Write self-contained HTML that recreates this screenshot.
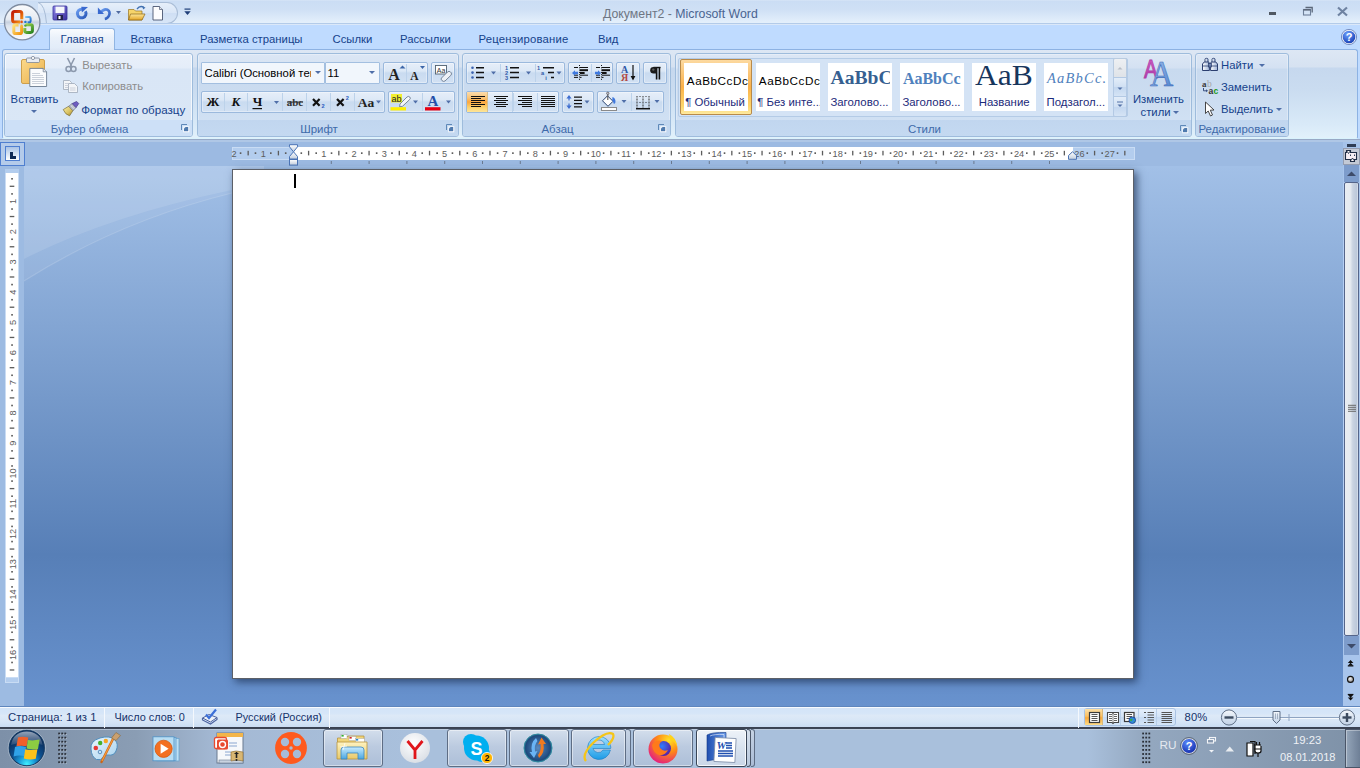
<!DOCTYPE html>
<html><head><meta charset="utf-8">
<style>
*{box-sizing:border-box}
html,body{margin:0;padding:0}
body{width:1360px;height:768px;overflow:hidden;position:relative;font-family:"Liberation Sans",sans-serif;font-size:11px;color:#15428b;background:#bfdbff}
.a{position:absolute}
.t{position:absolute;white-space:nowrap;line-height:1}
.tab{font-size:11.3px;color:#15428b}
/* title */
#title{left:0;top:0;width:1360px;height:25px;background:linear-gradient(#dae7f7 0,#cbddf4 1px,#cfe0f5 40%,#e3effb 92%);border-bottom:1px solid #d6e6f9}
#tabs{left:0;top:25px;width:1360px;height:24px;background:#bfdbff}
#ribbon{left:2px;top:49px;width:1356px;height:90px;border:1px solid #8db2e3;border-bottom:1px solid #d9f3fd;border-radius:3px 3px 2px 2px;background:linear-gradient(#dde7f4 0,#d6e2f1 17px,#c6d8ee 18px,#cadcf0 45%,#d9eaf8 85%,#e2f1fb 100%);box-shadow:0 1px 0 #e4fbff}
.grp{position:absolute;top:52.5px;height:84px;border:1px solid #9ebcdc;border-radius:3px;background:linear-gradient(#dce7f5 0,#d4e1f2 14px,#c8daef 15px,#cbdcf0 50%,#d3e3f5 100%);box-shadow:inset 0 0 0 1px rgba(255,255,255,.3)}
.glab{position:absolute;left:0;right:0;bottom:0;height:15.5px;background:linear-gradient(#c1d6ef,#c4d9f1);border-radius:0 0 2px 2px;color:#3e6aaa;text-align:center;font-size:11.45px;line-height:18px;padding-right:18px}
.grp.hov{background:linear-gradient(#e9f0fa 0,#e4edf9 14px,#d9e6f6 15px,#dae7f6 100%);box-shadow:inset 0 0 0 1px rgba(255,255,255,.7)}
.grp.hov .glab{background:#cde0f7}
#rulerrow{left:0;top:139px;width:1360px;height:27px;background:linear-gradient(#98a9c6 0,#98a9c6 1.5px,#afc7e6 1.5px,#afc7e6 3px,#9cbae2 3px)}
#docarea{left:24px;top:166px;width:1319px;height:540px;background:linear-gradient(#a2c0e7 0%,#577fb7 72%,#6892ce 100%)}
#leftcol{left:0;top:166px;width:24px;height:540px;background:#9dbbe2}
#page{left:232px;top:169px;width:902px;height:510px;background:#fff;border:1px solid #5c6068;box-shadow:3px 3px 8px rgba(25,45,80,.7)}
#status{left:0;top:706px;width:1360px;height:22px;background:linear-gradient(#5f86bd 0,#5f86bd 1px,#f7fafe 1px,#f7fafe 2px,#d3e4f8 2px,#d6e6f8 35%,#dde9f7 45%,#d6e5f6 75%,#cadcf2 100%);border-bottom:1px solid #3a4252}
#taskbar{left:0;top:728px;width:1360px;height:40px;background:linear-gradient(90deg,#7d90a8 0%,#8a9db4 10%,#a4b9d4 16%,#a9c0dc 30%,#a9c0dc 80%,#94a8c0 84%,#7e91a7 100%)}
.rt{position:absolute;white-space:nowrap;line-height:1;font-size:11.3px;color:#15428b}
.bgp{position:absolute;border:1px solid #9bb9dd;border-radius:2px;background:linear-gradient(#e6eef9 0%,#dce8f6 40%,#c9dbf0 50%,#d2e1f3 100%);box-shadow:inset 0 0 0 1px rgba(255,255,255,.35)}
.dv{position:absolute;top:1px;bottom:1px;width:1px;background:#bcd2ea}
.dd{position:absolute;width:0;height:0;border-left:3px solid transparent;border-right:3px solid transparent;border-top:3px solid #4f6ea8}
.inbox{position:absolute;border:1px solid #a3bfe0;border-radius:1px;background:#f1f6fc}
.launch{position:absolute;width:9px;height:9px}
.tbb{position:absolute;top:729px;height:38px;border:1px solid #5e6d84;border-radius:3px;background:linear-gradient(#d3deec 0%,#bccbe0 45%,#adbfd8 100%);box-shadow:inset 0 0 0 1px rgba(255,255,255,.45)}
</style></head><body>
<div id="title" class="a"></div>
<div id="tabs" class="a"></div>

<!-- QAT pill -->
<div class="a" style="left:38px;top:2px;width:140px;height:22px;border:1px solid #a9bdd7;border-left:none;border-radius:0 11px 11px 0;background:linear-gradient(#e6effa,#d9e6f7 50%,#cfdff4 52%,#d8e6f7)"></div>
<svg class="a" style="left:30px;top:0" width="20" height="25" viewBox="0 0 20 25"><path d="M8 2.5 Q15 4 16.5 23.5" fill="none" stroke="#a9bdd7" stroke-width="1"/></svg>
<!-- QAT icons -->
<svg class="a" style="left:50px;top:3px" width="145" height="20" viewBox="0 0 145 20">
<defs><linearGradient id="sv" x1="0" y1="0" x2="1" y2="1"><stop offset="0" stop-color="#8f86e6"/><stop offset="1" stop-color="#3a2f9e"/></linearGradient>
<linearGradient id="fo" x1="0" y1="0" x2="0" y2="1"><stop offset="0" stop-color="#fde79a"/><stop offset="1" stop-color="#e4a526"/></linearGradient></defs>
<rect x="3" y="3" width="14" height="14" rx="1" fill="url(#sv)" stroke="#34309a" stroke-width=".8"/>
<rect x="5.5" y="3.6" width="9" height="6.5" fill="#f4f6fb"/>
<rect x="7" y="12" width="6" height="5" fill="#22224a"/><rect x="8.5" y="13" width="2" height="3" fill="#fff"/>
<defs><linearGradient id="ar" x1="0" y1="0" x2="1" y2="1"><stop offset="0" stop-color="#6a9cf0"/><stop offset="1" stop-color="#2a58b8"/></linearGradient></defs>
<path d="M31.9 6.2 A4.3 4.3 0 1 0 35.4 8.3" fill="none" stroke="url(#ar)" stroke-width="3"/>
<path d="M31.3 3.8 L38 4 L31.9 9.6 Z" fill="#3a6ad0"/>
<path d="M50.6 9.6 Q54 5.2 57.6 6.8 Q60.6 8.6 59 12.6 Q57.8 15.4 54.8 16" fill="none" stroke="url(#ar)" stroke-width="2.6"/>
<path d="M47.9 4.6 V10.9 H54 Z" fill="#3a6ad0"/>
<path d="M66 8 L71 8 L68.5 11 Z" fill="#4f6aa0"/>
<path d="M78.5 6.5 L84 6.5 L85.5 8 L92 8 L92 17 L78.5 17 Z" fill="#f6d46a" stroke="#9a7420" stroke-width=".7"/>
<path d="M80.5 11 L95 11 L92 17 L78.5 17 Z" fill="url(#fo)" stroke="#8a6418" stroke-width=".7"/>
<path d="M87 6 Q90 2 94 4.5" fill="none" stroke="#3f6fb0" stroke-width="1.3"/><path d="M92.5 3 L95.5 4.8 L93 6.6Z" fill="#3f6fb0"/>
<path d="M103 3.5 L109.5 3.5 L112.5 6.5 L112.5 17 L103 17 Z" fill="#fdfdfe" stroke="#4a5670" stroke-width=".9"/>
<path d="M109.5 3.5 L109.5 6.5 L112.5 6.5" fill="#dfe3ea" stroke="#4a5670" stroke-width=".7"/>
<rect x="134.5" y="5.5" width="6" height="1.2" fill="#1f3f7a"/><path d="M134.3 8.3 L140.7 8.3 L137.5 12 Z" fill="#1f3f7a"/>
</svg>
<div class="t" style="left:603px;top:7.6px;font-size:12.3px;color:#6e7683">Документ2 - <span style="color:#4a6491">Microsoft Word</span></div>
<!-- window controls -->
<div class="a" style="left:1269px;top:12px;width:7px;height:2.5px;background:#505862"></div>
<svg class="a" style="left:1302px;top:6px" width="12" height="10" viewBox="0 0 12 10"><rect x="1.5" y="3.5" width="7" height="5.5" fill="none" stroke="#6d7f99" stroke-width="1.1"/><rect x="1.5" y="3" width="7" height="1.6" fill="#5b6779"/><path d="M3.5 1.5 H10.2 V6.5" fill="none" stroke="#5b6779" stroke-width="1.3"/></svg>
<svg class="a" style="left:1337px;top:6px" width="11" height="11" viewBox="0 0 11 11"><path d="M1 1.5 L10 9.5 M10 1.5 L1 9.5" stroke="#6f83a2" stroke-width="2.2"/></svg>
<!-- tabs -->
<div class="a" style="left:0;top:23px;width:1360px;height:1px;background:#b3cbe9"></div><div class="a" style="left:0;top:24px;width:1360px;height:1px;background:#dbe8f9"></div>
<div class="a" style="left:49px;top:28px;width:66px;height:23px;border:1px solid #90b5e2;border-bottom:none;border-radius:3px 3px 0 0;background:linear-gradient(#f9fbfe,#eaf1fa 40%,#e0ebf8)"></div>
<div class="t tab" style="left:60.5px;top:34px">Главная</div>
<div class="t tab" style="left:130.5px;top:34px">Вставка</div>
<div class="t tab" style="left:200px;top:34px">Разметка страницы</div>
<div class="t tab" style="left:332.5px;top:34px">Ссылки</div>
<div class="t tab" style="left:400px;top:34px">Рассылки</div>
<div class="t tab" style="left:478.5px;top:34px;letter-spacing:.2px">Рецензирование</div>
<div class="t tab" style="left:598px;top:34px">Вид</div>
<svg class="a" style="left:1341px;top:29px" width="16" height="16" viewBox="0 0 16 16"><defs><radialGradient id="hq" cx=".4" cy=".3" r=".8"><stop offset="0" stop-color="#6fa2ff"/><stop offset="1" stop-color="#0a2fa8"/></radialGradient></defs><circle cx="8" cy="8" r="7" fill="url(#hq)" stroke="#f2f6fb" stroke-width="1.3"/><circle cx="8" cy="8" r="7.6" fill="none" stroke="#2f4f9a" stroke-width=".6"/><text x="8" y="12.3" font-family="Liberation Sans" font-weight="bold" font-size="11" fill="#fff" text-anchor="middle">?</text></svg>

<!-- office button -->
<svg class="a" style="left:0;top:0" width="48" height="48" viewBox="0 0 48 48">
<defs>
<linearGradient id="ob" x1="0" y1="0" x2="0" y2="1"><stop offset="0" stop-color="#fbfcfd"/><stop offset=".42" stop-color="#e6ebf2"/><stop offset=".5" stop-color="#c6d0de"/><stop offset=".6" stop-color="#dde4ee"/><stop offset="1" stop-color="#fafbfd"/></linearGradient>
<linearGradient id="lr" x1="0" y1="0" x2="1" y2="1"><stop offset="0" stop-color="#c01a06"/><stop offset=".6" stop-color="#e05a08"/><stop offset="1" stop-color="#f6a21a"/></linearGradient>
<linearGradient id="ly" x1="0" y1="0" x2="1" y2="1"><stop offset="0" stop-color="#fde27a"/><stop offset="1" stop-color="#f39410"/></linearGradient>
<linearGradient id="lg" x1="0" y1="0" x2="1" y2="1"><stop offset="0" stop-color="#a6d84e"/><stop offset="1" stop-color="#2a8420"/></linearGradient>
<linearGradient id="lb" x1="0" y1="0" x2="1" y2="1"><stop offset="0" stop-color="#7cc8f6"/><stop offset="1" stop-color="#1b64c4"/></linearGradient>
</defs>
<circle cx="22.2" cy="22.2" r="17.7" fill="url(#ob)" stroke="#7f8ca0" stroke-width="1.3"/>
<path d="M20 22 H14.6 Q12.6 22 12.6 20 V13.6 Q12.6 11.6 14.6 11.6 H19.8 Q21.8 11.6 21.8 13.6 V19.2" fill="none" stroke="url(#lr)" stroke-width="3"/>
<path d="M21.6 26 V32 Q21.6 33.6 20 33.6 H15.4 Q13.8 33.6 13.8 32 V26.6 Q13.8 25 15.4 25 H18.5" fill="none" stroke="url(#ly)" stroke-width="3"/>
<path d="M25.6 24.8 H30.6 Q32.4 24.8 32.4 26.6 V30.6 Q32.4 32.4 30.6 32.4 H26.4 Q24.8 32.4 24.8 30.6 V28" fill="none" stroke="url(#lg)" stroke-width="3"/>
<path d="M25.2 17 H29.2 Q30.6 17 30.6 18.4 V21 Q30.6 22.2 29.4 22.2 H27.6" fill="none" stroke="url(#lb)" stroke-width="2"/>
<circle cx="21.6" cy="21.9" r="1.3" fill="#e8560c"/><circle cx="25.4" cy="21.9" r="1.2" fill="#1f74d4"/>
<circle cx="21.6" cy="25.6" r="1.2" fill="#f8b838"/><circle cx="25.4" cy="25.6" r="1.2" fill="#4ca43a"/>
</svg>
<div id="ribbon" class="a"></div>
<div class="a" style="left:50px;top:48px;width:64px;height:3px;background:linear-gradient(#e2ebf8,#dde7f4)"></div>
<div class="grp hov" style="left:4px;width:189px"><div class="glab">Буфер обмена</div></div>
<div class="grp" style="left:197px;width:262px"><div class="glab">Шрифт</div></div>
<div class="grp" style="left:462px;width:209px"><div class="glab">Абзац</div></div>
<div class="grp" style="left:675px;width:517px"><div class="glab">Стили</div></div>
<div class="grp" style="left:1195px;width:94px"><div class="glab" style="padding-right:0">Редактирование</div></div>
<!-- ===== Clipboard ===== -->
<svg class="a" style="left:18px;top:55px" width="32" height="34" viewBox="0 0 32 34">
<defs><linearGradient id="cb" x1="0" y1="0" x2="1" y2="1"><stop offset="0" stop-color="#fbd98c"/><stop offset="1" stop-color="#eab04a"/></linearGradient></defs>
<rect x="3.5" y="4.5" width="23" height="24" rx="1.5" fill="url(#cb)" stroke="#c99840" stroke-width=".9"/>
<rect x="8.5" y="3" width="13" height="4.5" rx="1" fill="#e8ecf2" stroke="#7b8797" stroke-width=".8"/>
<circle cx="15" cy="3" r="1.6" fill="#fff" stroke="#7b8797" stroke-width=".8"/>
<path d="M11.8 13.4 H25.2 L28.6 16.8 V31.5 H11.8 Z" fill="#fbfcfd" stroke="#6a7a8e" stroke-width=".9"/>
<path d="M25.2 13.4 V16.8 H28.6" fill="#e4e8ee" stroke="#6a7a8e" stroke-width=".7"/>
<path d="M14 18.5 H22 M14 20.5 H25 M14 22.5 H26 M14 24.5 H26 M14 26.5 H26 M14 28.5 H26" stroke="#c5ccd6" stroke-width=".9"/>
</svg>
<div class="rt" style="left:10.6px;top:94px">Вставить</div>
<div class="dd" style="left:31px;top:110px"></div>
<svg class="a" style="left:64px;top:57px" width="14" height="16" viewBox="0 0 14 16">
<path d="M3.5 1 L8 10 M10.5 1 L6 10" stroke="#8c99ad" stroke-width="1.6"/>
<circle cx="4.5" cy="12" r="2.5" fill="none" stroke="#8c99ad" stroke-width="1.5"/><circle cx="9.5" cy="12" r="2.5" fill="none" stroke="#8c99ad" stroke-width="1.5"/>
</svg>
<div class="rt" style="left:82.2px;top:59.5px;color:#8d8d8d">Вырезать</div>
<svg class="a" style="left:62px;top:79px" width="18" height="15" viewBox="0 0 18 15">
<path d="M1.5 1.5 H7.5 L9.5 3.5 V10.5 H1.5 Z" fill="#f3f5f8" stroke="#a6b0be" stroke-width=".9"/>
<path d="M6.5 4.5 H12.5 L15.5 7.5 V13.5 H6.5 Z" fill="#f3f5f8" stroke="#a6b0be" stroke-width=".9"/>
<path d="M3 4.5 H7 M3 6.5 H7 M3 8.5 H6 M8 9 H13.5 M8 11 H13.5" stroke="#c0c7d2" stroke-width=".8"/>
</svg>
<div class="rt" style="left:82.2px;top:81.3px;color:#8d8d8d">Копировать</div>
<svg class="a" style="left:62px;top:101px" width="18" height="16" viewBox="0 0 18 16">
<defs><linearGradient id="br" x1="0" y1="0" x2="1" y2="1"><stop offset="0" stop-color="#fbf2a8"/><stop offset=".6" stop-color="#d8c060"/><stop offset="1" stop-color="#9a8028"/></linearGradient></defs>
<path d="M1.2 8.6 L6.8 5.2 L11 9.6 L7.6 14.8 Q3.4 13.8 1.2 8.6Z" fill="url(#br)" stroke="#6a5a20" stroke-width=".6"/>
<path d="M6.8 5.2 L10.2 2.6 L14 6.6 L11 9.6 Z" fill="#d4d8e0" stroke="#50586a" stroke-width=".6"/>
<path d="M8 5 L12 8.8 M9.4 3.8 L13 7.6" stroke="#8a90a0" stroke-width=".5"/>
<path d="M10.2 2.6 L14.6 .4 L16.8 2.6 L14 6.6 Z" fill="#6d5cc0" stroke="#3a2e80" stroke-width=".6"/>
</svg>
<div class="rt" style="left:81.3px;top:103.8px;font-size:11.6px">Формат по образцу</div>
<svg class="launch" style="left:181px;top:124px" viewBox="0 0 9 9"><path d="M.5 6 V.5 H6" fill="none" stroke="#5e88b8" stroke-width="1"/><rect x="2.3" y="2.3" width="6" height="6" fill="#fff" opacity=".9"/><rect x="3" y="3" width="4.2" height="4.2" fill="#4f7aae"/><rect x="3" y="3" width="1.2" height="1.2" fill="#fff" opacity=".8"/></svg>
<!-- ===== Font ===== -->
<div class="inbox" style="left:201px;top:62px;width:124px;height:22px"></div>
<div class="rt" style="left:204.5px;top:67.6px;color:#000;font-size:11.3px;width:106px;overflow:hidden">Calibri (Основной текст)</div>
<div class="dd" style="left:315px;top:71px"></div>
<div class="inbox" style="left:325px;top:62px;width:55px;height:22px"></div>
<div class="rt" style="left:327.5px;top:67.6px;color:#000">11</div>
<div class="dd" style="left:369px;top:71px"></div>
<div class="bgp" style="left:383px;top:62px;width:45px;height:22px"><div class="dv" style="left:22px"></div></div>
<svg class="a" style="left:385px;top:63px" width="42" height="20" viewBox="0 0 42 20">
<text x="9" y="16.5" font-family="Liberation Serif" font-weight="bold" font-size="16" fill="#222" text-anchor="middle">A</text>
<path d="M14.5 5.5 L17.5 2.5 L20.5 5.5Z" fill="#3d66a8"/>
<text x="29.5" y="16.5" font-family="Liberation Serif" font-weight="bold" font-size="11.5" fill="#222" text-anchor="middle">A</text>
<path d="M35 3 L40 3 L37.5 6Z" fill="#3d66a8"/>
</svg>
<div class="bgp" style="left:431px;top:62px;width:24px;height:22px"></div>
<svg class="a" style="left:433px;top:64px" width="20" height="18" viewBox="0 0 20 18">
<rect x="2.5" y="1.5" width="11" height="8.5" fill="#fff" stroke="#506070" stroke-width=".9"/>
<text x="8" y="8.6" font-family="Liberation Sans" font-size="7" fill="#333" text-anchor="middle">Aa</text>
<path d="M8.5 14 L14.5 8 Q16 6.6 17.5 8 L18 8.5 Q19.2 10 17.8 11.4 L12 17 Q10.5 18 9 16.6 L8.6 16.2 Q7.6 15 8.5 14Z" fill="#eef1f6" stroke="#6a7a90" stroke-width=".9"/>
</svg>
<div class="bgp" style="left:201px;top:91px;width:184px;height:22px">
<div class="dv" style="left:22px"></div><div class="dv" style="left:45px"></div><div class="dv" style="left:80px"></div><div class="dv" style="left:104px"></div><div class="dv" style="left:128px"></div><div class="dv" style="left:152px"></div>
</div>
<svg class="a" style="left:202px;top:92px" width="182" height="20" viewBox="0 0 182 20">
<text x="11" y="14.3" font-family="Liberation Serif" font-weight="bold" font-size="13" fill="#111" text-anchor="middle">Ж</text>
<text x="34" y="14.3" font-family="Liberation Serif" font-weight="bold" font-style="italic" font-size="13" fill="#111" text-anchor="middle">К</text>
<text x="55.5" y="14.3" font-family="Liberation Serif" font-weight="bold" font-size="13" fill="#111" text-anchor="middle">Ч</text>
<rect x="50.5" y="16" width="9.5" height="1.2" fill="#111"/>
<path d="M72 9 L77 9 L74.5 12Z" fill="#4f6ea8"/>
<text x="93" y="13.8" font-family="Liberation Serif" font-weight="bold" font-size="11" fill="#333" text-anchor="middle">abc</text>
<rect x="85" y="9.6" width="16" height="1" fill="#333"/>
<path d="M111 7 L117.6 13.8 M117.6 7 L111 13.8" stroke="#111" stroke-width="2.2"/>
<text x="121" y="15.6" font-family="Liberation Sans" font-weight="bold" font-size="5.6" fill="#2a5cc0" text-anchor="middle">2</text>
<path d="M135 7 L141.6 13.8 M141.6 7 L135 13.8" stroke="#111" stroke-width="2.2"/>
<text x="145.3" y="8" font-family="Liberation Sans" font-weight="bold" font-size="5.6" fill="#2a5cc0" text-anchor="middle">2</text>
<text x="164" y="15" font-family="Liberation Serif" font-weight="bold" font-size="13.5" fill="#222" text-anchor="middle">Aa</text>
<path d="M174 8.5 L179 8.5 L176.5 11.5Z" fill="#4f6ea8"/>
</svg>
<div class="bgp" style="left:388px;top:91px;width:67px;height:22px"><div class="dv" style="left:33px"></div></div>
<svg class="a" style="left:389px;top:92px" width="65" height="20" viewBox="0 0 65 20">
<rect x="2" y="2" width="11" height="8.5" fill="#f2ee30"/>
<text x="7.5" y="9.5" font-family="Liberation Sans" font-size="9" fill="#222" text-anchor="middle">ab</text>
<path d="M11 12 L18 5 Q19.5 3.8 20.8 5 Q22 6.4 20.6 7.6 L13.6 14.2 L10.6 14.8 Z" fill="#f5f7fa" stroke="#5d6d85" stroke-width=".8"/>
<rect x="1.5" y="15.2" width="15.5" height="3.3" fill="#ffef00"/>
<path d="M24 8.5 L29 8.5 L26.5 11.5Z" fill="#4f6ea8"/>
<text x="44" y="14.2" font-family="Liberation Serif" font-weight="bold" font-size="15" fill="#2550a8" text-anchor="middle">A</text>
<rect x="36" y="15.2" width="15.5" height="3.3" fill="#e70012"/>
<path d="M57 8.5 L62 8.5 L59.5 11.5Z" fill="#4f6ea8"/>
</svg>
<svg class="launch" style="left:446px;top:124.3px" viewBox="0 0 9 9"><path d="M.5 6 V.5 H6" fill="none" stroke="#5e88b8" stroke-width="1"/><rect x="2.3" y="2.3" width="6" height="6" fill="#fff" opacity=".9"/><rect x="3" y="3" width="4.2" height="4.2" fill="#4f7aae"/><rect x="3" y="3" width="1.2" height="1.2" fill="#fff" opacity=".8"/></svg>
<!-- ===== Paragraph ===== -->
<div class="bgp" style="left:466px;top:62px;width:99px;height:22px"><div class="dv" style="left:33px"></div><div class="dv" style="left:68px"></div></div>
<svg class="a" style="left:466px;top:62px" width="99" height="22" viewBox="0 0 99 22">
<g fill="#3a62b0"><circle cx="6.5" cy="5.7" r="1.3"/><circle cx="6.5" cy="10.6" r="1.3"/><circle cx="6.5" cy="15.5" r="1.3"/></g>
<path d="M10 5.7 H18 M10 10.6 H18 M10 15.5 H18" stroke="#111" stroke-width="1.5"/>
<path d="M25 9.5 L30 9.5 L27.5 12.5Z" fill="#4f6ea8"/>
<g font-family="Liberation Sans" font-weight="bold" font-size="5.6" fill="#2f5aa8" text-anchor="middle"><text x="40.5" y="7.8">1</text><text x="40.5" y="12.7">2</text><text x="40.5" y="17.6">3</text></g>
<path d="M44 5.7 H53 M44 10.6 H53 M44 15.5 H53" stroke="#111" stroke-width="1.5"/>
<path d="M60 9.5 L65 9.5 L62.5 12.5Z" fill="#4f6ea8"/>
<g font-family="Liberation Sans" font-weight="bold" font-size="5.6" fill="#2f5aa8" text-anchor="middle"><text x="72.5" y="7.8">1</text><text x="76.5" y="12.7">a</text><text x="80" y="17.6">i</text></g>
<path d="M77 5.7 H88 M82 10.6 H88 M85 15.5 H88" stroke="#111" stroke-width="1.5"/>
<path d="M90.5 9.5 L95.5 9.5 L93 12.5Z" fill="#4f6ea8"/>
</svg>
<div class="bgp" style="left:568px;top:62px;width:45px;height:22px"><div class="dv" style="left:22px"></div></div>
<svg class="a" style="left:568px;top:62px" width="45" height="22" viewBox="0 0 45 22">
<path d="M11.5 3 V18" stroke="#111" stroke-width="1" stroke-dasharray="1 1.3"/>
<path d="M6 5.5 H10 M12 5.5 H20 M12 11 H16.5 M6 13.2 H10 M12 13.2 H20 M6 15.4 H10 M12 15.4 H13.5" stroke="#111" stroke-width="1"/>
<path d="M12 8.2 H20" stroke="#111" stroke-width="2"/><path d="M12 11 H16.5" stroke="#111" stroke-width="2"/>
<path d="M4 11 L7 8.3 V9.8 H10 V12.2 H7 V13.7Z" fill="#3f7ae0"/>
<path d="M33.5 3 V18" stroke="#111" stroke-width="1" stroke-dasharray="1 1.3"/>
<path d="M28 5.5 H32 M34 5.5 H42 M34 11 H38.5 M28 13.2 H32 M34 13.2 H42 M28 15.4 H32 M34 15.4 H35.5" stroke="#111" stroke-width="1"/>
<path d="M34 8.2 H42" stroke="#111" stroke-width="2"/><path d="M34 11 H38.5" stroke="#111" stroke-width="2"/>
<path d="M33 11 L30 8.3 V9.8 H27 V12.2 H30 V13.7Z" fill="#3f7ae0"/>
</svg>
<div class="bgp" style="left:616px;top:62px;width:24px;height:22px"></div>
<svg class="a" style="left:616px;top:62px" width="24" height="22" viewBox="0 0 24 22">
<text x="8.7" y="11" font-family="Liberation Serif" font-weight="bold" font-size="10" fill="#2f58a6" text-anchor="middle">A</text>
<text x="8.7" y="19.4" font-family="Liberation Serif" font-weight="bold" font-size="10" fill="#b24a44" text-anchor="middle">Я</text>
<path d="M17 3 V17" stroke="#111" stroke-width="1.2"/><path d="M14.6 14 L17 18.5 L19.4 14Z" fill="#111"/>
</svg>
<div class="bgp" style="left:643px;top:62px;width:24px;height:22px"></div>
<svg class="a" style="left:643px;top:62px" width="24" height="22" viewBox="0 0 24 22">
<path d="M17.5 5.5 H10.5" stroke="#111" stroke-width="1.4"/>
<path d="M13.6 5 V17.5 M16.4 5 V17.5" stroke="#111" stroke-width="1.6"/>
<path d="M13.6 5 H10.5 A3.3 3.3 0 0 0 10.5 11.6 H13.6Z" fill="#1a1a1a"/>
<circle cx="10.3" cy="7.6" r="1.2" fill="#888" opacity=".6"/>
</svg>
<div class="bgp" style="left:466px;top:91px;width:93px;height:22px"><div class="dv" style="left:46px"></div><div class="dv" style="left:70px"></div></div>
<div class="a" style="left:467px;top:92px;width:21px;height:20px;background:linear-gradient(#fbdcae 0%,#fcc474 30%,#fba740 50%,#fdd06a 75%,#fde59a 100%);border-right:1px solid #d8c08a"></div>
<div class="dv" style="left:512px;top:92px;height:20px"></div>
<svg class="a" style="left:466px;top:91px" width="93" height="22" viewBox="0 0 93 22">
<path d="M5 5.5 H19 M5 7.5 H15 M5 9.5 H19 M5 11.5 H15 M5 13.5 H19 M5 15.5 H15" stroke="#111" stroke-width="1.1"/>
<path d="M28 5.5 H42 M30 7.5 H40 M28 9.5 H42 M30 11.5 H40 M28 13.5 H42 M30 15.5 H40" stroke="#111" stroke-width="1.1"/>
<path d="M52 5.5 H66 M56 7.5 H66 M52 9.5 H66 M56 11.5 H66 M52 13.5 H66 M56 15.5 H66" stroke="#111" stroke-width="1.1"/>
<path d="M75 5.5 H89 M75 7.5 H89 M75 9.5 H89 M75 11.5 H89 M75 13.5 H89 M75 15.5 H89" stroke="#111" stroke-width="1.1"/>
</svg>
<div class="bgp" style="left:562px;top:91px;width:32px;height:22px"></div>
<svg class="a" style="left:562px;top:91px" width="32" height="22" viewBox="0 0 32 22">
<path d="M7 5 V9.5 M7 12.5 V17" stroke="#3f6fd0" stroke-width="1.2"/><path d="M4.4 7.6 L7 4 L9.6 7.6Z M4.4 14.4 L7 18 L9.6 14.4Z" fill="#3f6fd0"/>
<path d="M12 6.2 H20 M12 9.4 H20 M12 12.6 H20 M12 15.8 H20" stroke="#111" stroke-width="1.2"/>
<path d="M22.5 9.5 L27.5 9.5 L25 12.5Z" fill="#4f6ea8"/>
</svg>
<div class="bgp" style="left:597px;top:91px;width:67px;height:22px"><div class="dv" style="left:33px"></div></div>
<svg class="a" style="left:597px;top:91px" width="67" height="22" viewBox="0 0 67 22">
<path d="M5.5 9.8 L10.5 4.8 L16 10.3 L11 15.3 Z" fill="#fff" stroke="#27406e" stroke-width="1"/>
<path d="M10.8 1.5 V9" stroke="#555" stroke-width="1.1"/><circle cx="10.8" cy="2.3" r="1.2" fill="#ccd" stroke="#555" stroke-width=".7"/>
<path d="M15.5 6 Q19 7 18.4 11.5 Q17.8 13 16.6 12.6 Q16.2 10 15.2 9.6Z" fill="#3f78dd"/>
<rect x="4.5" y="16.5" width="15" height="3" fill="#fff" stroke="#8a8a8a" stroke-width="1"/>
<path d="M24.5 9 L29.5 9 L27 12Z" fill="#4f6ea8"/>
<g fill="#333">
<rect x="39.5" y="5" width="1" height="1"/><rect x="42.5" y="5" width="1" height="1"/><rect x="45.5" y="5" width="1" height="1"/><rect x="48.5" y="5" width="1" height="1"/><rect x="51.5" y="5" width="1" height="1"/><rect x="39.5" y="8" width="1" height="1"/><rect x="45.5" y="8" width="1" height="1"/><rect x="51.5" y="8" width="1" height="1"/><rect x="39.5" y="11" width="1" height="1"/><rect x="42.5" y="11" width="1" height="1"/><rect x="45.5" y="11" width="1" height="1"/><rect x="48.5" y="11" width="1" height="1"/><rect x="51.5" y="11" width="1" height="1"/><rect x="39.5" y="14" width="1" height="1"/><rect x="45.5" y="14" width="1" height="1"/><rect x="51.5" y="14" width="1" height="1"/><rect x="39.5" y="6.5" width="1" height="1"/><rect x="45.5" y="6.5" width="1" height="1"/><rect x="51.5" y="6.5" width="1" height="1"/><rect x="39.5" y="9.5" width="1" height="1"/><rect x="45.5" y="9.5" width="1" height="1"/><rect x="51.5" y="9.5" width="1" height="1"/><rect x="39.5" y="12.5" width="1" height="1"/><rect x="45.5" y="12.5" width="1" height="1"/><rect x="51.5" y="12.5" width="1" height="1"/><rect x="39.5" y="15.5" width="1" height="1"/><rect x="45.5" y="15.5" width="1" height="1"/><rect x="51.5" y="15.5" width="1" height="1"/></g>
<path d="M39 17.7 H53" stroke="#111" stroke-width="1.5"/>
<path d="M57.5 9 L62.5 9 L60 12Z" fill="#4f6ea8"/>
</svg>
<svg class="launch" style="left:658px;top:124.2px" viewBox="0 0 9 9"><path d="M.5 6 V.5 H6" fill="none" stroke="#5e88b8" stroke-width="1"/><rect x="2.3" y="2.3" width="6" height="6" fill="#fff" opacity=".9"/><rect x="3" y="3" width="4.2" height="4.2" fill="#4f7aae"/><rect x="3" y="3" width="1.2" height="1.2" fill="#fff" opacity=".8"/></svg>
<!-- ===== Styles ===== -->
<div class="a" style="left:678px;top:58px;width:450px;height:59px;border:1px solid #b4cbe6;border-radius:2px;background:#d4e3f5"></div>
<div class="a" style="left:680px;top:59px;width:72px;height:56px;border:1px solid #b88a4a;border-radius:2px;background:linear-gradient(#fcd9a0,#fbb14a 50%,#fdd56a 85%,#fee9a0);"></div>
<div class="a" style="left:684px;top:63px;width:64px;height:48px;background:#fff"></div>
<div class="a" style="left:756px;top:63px;width:64px;height:48px;background:#fff"></div>
<div class="a" style="left:828px;top:63px;width:64px;height:48px;background:#fff"></div>
<div class="a" style="left:900px;top:63px;width:64px;height:48px;background:#fff"></div>
<div class="a" style="left:972px;top:63px;width:64px;height:48px;background:#fff"></div>
<div class="a" style="left:1044px;top:63px;width:64px;height:48px;background:#fff"></div>
<div class="a" style="left:684px;top:63px;width:64px;height:48px;overflow:hidden"><div class="rt" style="left:2.8px;top:11.9px;color:#000;font-size:11.7px;letter-spacing:.55px">AaBbCcDc</div><div class="rt" style="left:1.2px;top:33.8px;font-size:11.4px;color:#1c2a7a">¶ Обычный</div></div>
<div class="a" style="left:756px;top:63px;width:64px;height:48px;overflow:hidden"><div class="rt" style="left:2.8px;top:11.9px;color:#000;font-size:11.7px;letter-spacing:.55px">AaBbCcDc</div><div class="rt" style="left:1.2px;top:33.8px;font-size:11.4px;color:#1c2a7a">¶ Без инте...</div></div>
<div class="a" style="left:828px;top:63px;width:62px;height:48px;overflow:hidden"><div class="rt" style="left:2.5px;top:5.3px;color:#365f91;font-family:'Liberation Serif';font-weight:bold;font-size:19.6px">AaBbCc</div><div class="rt" style="left:2.4px;top:33.8px;font-size:11.4px;color:#1c2a7a">Заголово...</div></div>
<div class="a" style="left:900px;top:63px;width:64px;height:48px;overflow:hidden"><div class="rt" style="left:2.9px;top:8.2px;color:#4f81bd;font-family:'Liberation Serif';font-weight:bold;font-size:16px">AaBbCc</div><div class="rt" style="left:2.4px;top:33.8px;font-size:11.4px;color:#1c2a7a">Заголово...</div></div>
<div class="a" style="left:972px;top:63px;width:64px;height:48px;overflow:hidden"><div class="rt" style="left:2.8px;top:-2.6px;color:#17365d;font-family:'Liberation Serif';font-size:30px;transform:scaleX(1.05);transform-origin:0 0">AaB</div><div class="rt" style="left:6.7px;top:33.8px;font-size:11.4px;color:#1c2a7a">Название</div></div>
<div class="a" style="left:1044px;top:63px;width:62px;height:48px;overflow:hidden"><div class="rt" style="left:3px;top:8.3px;color:#4f81bd;font-family:'Liberation Serif';font-style:italic;font-size:14.5px;letter-spacing:1.2px">AaBbCc.</div><div class="rt" style="left:2.6px;top:33.8px;font-size:11.4px;color:#1c2a7a">Подзагол...</div></div>
<div class="a" style="left:1113px;top:58px;width:14px;height:20px;border:1px solid #b9cbe0;border-radius:2px 2px 0 0;background:linear-gradient(#eef0f3,#dfe3e8)"></div>
<div class="a" style="left:1113px;top:77px;width:14px;height:20px;border:1px solid #b3c9e4;background:linear-gradient(#e3edf9,#d0e0f3 50%,#c2d6ef 51%,#d5e4f5)"></div>
<div class="a" style="left:1113px;top:96px;width:14px;height:21px;border:1px solid #b3c9e4;border-radius:0 0 2px 2px;background:linear-gradient(#e3edf9,#d0e0f3 50%,#c2d6ef 51%,#d5e4f5)"></div>
<svg class="a" style="left:1113px;top:58px" width="14" height="59" viewBox="0 0 14 59">
<path d="M4.5 11.5 L7 9 L9.5 11.5Z" fill="#b8bec8"/>
<path d="M4.5 29.5 L9.5 29.5 L7 32Z" fill="#5573a8"/>
<path d="M4 44 H10" stroke="#5573a8" stroke-width="1"/><path d="M4.5 46.5 L9.5 46.5 L7 49Z" fill="#5573a8"/>
</svg>
<svg class="a" style="left:1140px;top:56px" width="36" height="32" viewBox="0 0 36 32">
<defs><linearGradient id="am" x1="0" y1="0" x2="0" y2="1"><stop offset="0" stop-color="#e46ad6"/><stop offset="1" stop-color="#a0309c"/></linearGradient>
<linearGradient id="ab" x1="0" y1="0" x2="1" y2="1"><stop offset="0" stop-color="#a8c8f4"/><stop offset="1" stop-color="#4a7cc8"/></linearGradient></defs>
<text x="10.8" y="22.2" font-family="Liberation Sans" font-size="26" fill="url(#am)" stroke="#b040a8" stroke-width=".9" text-anchor="middle" transform="translate(10.8 0) scale(.78 1) translate(-10.8 0)">A</text>
<text x="21.6" y="29.8" font-family="Liberation Serif" font-size="35" fill="url(#ab)" stroke="#3d6cb8" stroke-width=".6" text-anchor="middle" transform="translate(21.6 0) scale(.92 1) translate(-21.6 0)">A</text>
</svg>
<div class="rt" style="left:1133px;top:94.3px">Изменить</div>
<div class="rt" style="left:1140.5px;top:107px">стили</div>
<div class="dd" style="left:1172.5px;top:111px"></div>
<svg class="launch" style="left:1179.5px;top:124.5px" viewBox="0 0 9 9"><path d="M.5 6 V.5 H6" fill="none" stroke="#5e88b8" stroke-width="1"/><rect x="2.3" y="2.3" width="6" height="6" fill="#fff" opacity=".9"/><rect x="3" y="3" width="4.2" height="4.2" fill="#4f7aae"/><rect x="3" y="3" width="1.2" height="1.2" fill="#fff" opacity=".8"/></svg>
<!-- ===== Editing ===== -->
<svg class="a" style="left:1200px;top:56px" width="20" height="17" viewBox="0 0 20 17">
<defs><linearGradient id="bn" x1="0" y1="0" x2="1" y2="0"><stop offset="0" stop-color="#fff"/><stop offset="1" stop-color="#9fb4d8"/></linearGradient></defs>
<path d="M5 6 V3.2 Q5 2.3 6.5 2.3 Q8 2.3 8 3.2 V6" fill="url(#bn)" stroke="#2b3f70" stroke-width=".9"/>
<path d="M12 6 V3.2 Q12 2.3 13.5 2.3 Q15 2.3 15 3.2 V6" fill="url(#bn)" stroke="#2b3f70" stroke-width=".9"/>
<path d="M2.5 14.5 V8 L4.2 6 H8.8 L9.4 8 V14.5Z" fill="url(#bn)" stroke="#2b3f70" stroke-width="1"/>
<path d="M10.6 14.5 V8 L11.2 6 H15.8 L17.5 8 V14.5Z" fill="url(#bn)" stroke="#2b3f70" stroke-width="1"/>
<rect x="8.6" y="7.5" width="2.8" height="3.5" fill="#6f86b4" stroke="#2b3f70" stroke-width=".7"/>
<path d="M2.5 10 H9.4 M10.6 10 H17.5" stroke="#2b3f70" stroke-width=".8"/>
</svg>
<div class="rt" style="left:1221px;top:60px">Найти</div>
<div class="dd" style="left:1258.5px;top:63.5px"></div>
<svg class="a" style="left:1200px;top:78px" width="20" height="17" viewBox="0 0 20 17">
<text x="2" y="8.6" font-family="Liberation Serif" font-weight="bold" font-size="9" fill="#3a3a3a">a</text><text x="7" y="8.6" font-family="Liberation Serif" font-size="9.5" fill="#a8a8a8">b</text>
<path d="M3.5 10 V12.8 H6.5" fill="none" stroke="#3a5080" stroke-width="1"/><path d="M6 11.3 L8 12.8 L6 14.3Z" fill="#3a5080"/>
<text x="8.6" y="15.6" font-family="Liberation Sans" font-weight="bold" font-size="8.6" fill="#333">a</text><text x="13.4" y="15.6" font-family="Liberation Sans" font-weight="bold" font-size="8.6" fill="#1a9a1a">c</text>
</svg>
<div class="rt" style="left:1221px;top:82.2px">Заменить</div>
<svg class="a" style="left:1204px;top:101px" width="12" height="16" viewBox="0 0 12 16">
<path d="M1.5 1 V12.5 L4.2 10 L6.5 15 L8.5 14 L6.3 9.2 L10 9 Z" fill="#fff" stroke="#333" stroke-width=".9"/>
</svg>
<div class="rt" style="left:1221px;top:104.2px">Выделить</div>
<div class="dd" style="left:1276px;top:108.3px"></div>
<div id="rulerrow" class="a"></div>
<div class="a" style="left:0;top:142px;width:25px;height:24px;border:1px solid #4f7fd0;background:#b4cbea"></div>
<div class="a" style="left:5px;top:146px;width:15px;height:15px;border:1px solid #4f7fd0;background:linear-gradient(#a9c3e6,#fff)"></div>
<div class="a" style="left:10px;top:152px;width:2.5px;height:6px;background:#0f2a55"></div><div class="a" style="left:10px;top:156px;width:6px;height:2.5px;background:#0f2a55"></div>
<div class="a" style="left:232px;top:147px;width:903px;height:13px;background:#b3cdee;border:1px solid #c9dcf4"></div>
<div class="a" style="left:293px;top:147px;width:780px;height:13px;background:#fff"></div>
<svg class="a" style="left:0;top:140px" width="1360" height="30" viewBox="0 0 1360 30"><rect x="284.90" y="12.3" width="1.6" height="1.7" fill="#5c5c5c"/><rect x="277.75" y="10.8" width="1.3" height="4.6" fill="#5c5c5c"/><rect x="270.00" y="12.3" width="1.6" height="1.7" fill="#5c5c5c"/><text x="263.27" y="16.6" font-family="Liberation Sans" font-size="9.2" fill="#5c5c5c" text-anchor="middle">1</text><rect x="254.67" y="12.3" width="1.6" height="1.7" fill="#5c5c5c"/><rect x="247.52" y="10.8" width="1.3" height="4.6" fill="#5c5c5c"/><rect x="239.77" y="12.3" width="1.6" height="1.7" fill="#5c5c5c"/><text x="234.04" y="16.6" font-family="Liberation Sans" font-size="9.2" fill="#5c5c5c" text-anchor="middle">2</text><rect x="300.50" y="12.3" width="1.6" height="1.7" fill="#5c5c5c"/><rect x="307.95" y="10.8" width="1.3" height="4.6" fill="#5c5c5c"/><rect x="315.40" y="12.3" width="1.6" height="1.7" fill="#5c5c5c"/><text x="323.73" y="16.6" font-family="Liberation Sans" font-size="9.2" fill="#5c5c5c" text-anchor="middle">1</text><rect x="330.73" y="12.3" width="1.6" height="1.7" fill="#5c5c5c"/><rect x="338.18" y="10.8" width="1.3" height="4.6" fill="#5c5c5c"/><rect x="345.63" y="12.3" width="1.6" height="1.7" fill="#5c5c5c"/><text x="353.96" y="16.6" font-family="Liberation Sans" font-size="9.2" fill="#5c5c5c" text-anchor="middle">2</text><rect x="360.96" y="12.3" width="1.6" height="1.7" fill="#5c5c5c"/><rect x="368.41" y="10.8" width="1.3" height="4.6" fill="#5c5c5c"/><rect x="375.86" y="12.3" width="1.6" height="1.7" fill="#5c5c5c"/><text x="384.19" y="16.6" font-family="Liberation Sans" font-size="9.2" fill="#5c5c5c" text-anchor="middle">3</text><rect x="391.19" y="12.3" width="1.6" height="1.7" fill="#5c5c5c"/><rect x="398.64" y="10.8" width="1.3" height="4.6" fill="#5c5c5c"/><rect x="406.09" y="12.3" width="1.6" height="1.7" fill="#5c5c5c"/><text x="414.42" y="16.6" font-family="Liberation Sans" font-size="9.2" fill="#5c5c5c" text-anchor="middle">4</text><rect x="421.42" y="12.3" width="1.6" height="1.7" fill="#5c5c5c"/><rect x="428.87" y="10.8" width="1.3" height="4.6" fill="#5c5c5c"/><rect x="436.32" y="12.3" width="1.6" height="1.7" fill="#5c5c5c"/><text x="444.65" y="16.6" font-family="Liberation Sans" font-size="9.2" fill="#5c5c5c" text-anchor="middle">5</text><rect x="451.65" y="12.3" width="1.6" height="1.7" fill="#5c5c5c"/><rect x="459.10" y="10.8" width="1.3" height="4.6" fill="#5c5c5c"/><rect x="466.55" y="12.3" width="1.6" height="1.7" fill="#5c5c5c"/><text x="474.88" y="16.6" font-family="Liberation Sans" font-size="9.2" fill="#5c5c5c" text-anchor="middle">6</text><rect x="481.88" y="12.3" width="1.6" height="1.7" fill="#5c5c5c"/><rect x="489.33" y="10.8" width="1.3" height="4.6" fill="#5c5c5c"/><rect x="496.78" y="12.3" width="1.6" height="1.7" fill="#5c5c5c"/><text x="505.11" y="16.6" font-family="Liberation Sans" font-size="9.2" fill="#5c5c5c" text-anchor="middle">7</text><rect x="512.11" y="12.3" width="1.6" height="1.7" fill="#5c5c5c"/><rect x="519.56" y="10.8" width="1.3" height="4.6" fill="#5c5c5c"/><rect x="527.01" y="12.3" width="1.6" height="1.7" fill="#5c5c5c"/><text x="535.34" y="16.6" font-family="Liberation Sans" font-size="9.2" fill="#5c5c5c" text-anchor="middle">8</text><rect x="542.34" y="12.3" width="1.6" height="1.7" fill="#5c5c5c"/><rect x="549.79" y="10.8" width="1.3" height="4.6" fill="#5c5c5c"/><rect x="557.24" y="12.3" width="1.6" height="1.7" fill="#5c5c5c"/><text x="565.57" y="16.6" font-family="Liberation Sans" font-size="9.2" fill="#5c5c5c" text-anchor="middle">9</text><rect x="572.57" y="12.3" width="1.6" height="1.7" fill="#5c5c5c"/><rect x="580.02" y="10.8" width="1.3" height="4.6" fill="#5c5c5c"/><rect x="587.47" y="12.3" width="1.6" height="1.7" fill="#5c5c5c"/><text x="595.80" y="16.6" font-family="Liberation Sans" font-size="9.2" fill="#5c5c5c" text-anchor="middle">10</text><rect x="602.80" y="12.3" width="1.6" height="1.7" fill="#5c5c5c"/><rect x="610.25" y="10.8" width="1.3" height="4.6" fill="#5c5c5c"/><rect x="617.70" y="12.3" width="1.6" height="1.7" fill="#5c5c5c"/><text x="626.03" y="16.6" font-family="Liberation Sans" font-size="9.2" fill="#5c5c5c" text-anchor="middle">11</text><rect x="633.03" y="12.3" width="1.6" height="1.7" fill="#5c5c5c"/><rect x="640.48" y="10.8" width="1.3" height="4.6" fill="#5c5c5c"/><rect x="647.93" y="12.3" width="1.6" height="1.7" fill="#5c5c5c"/><text x="656.26" y="16.6" font-family="Liberation Sans" font-size="9.2" fill="#5c5c5c" text-anchor="middle">12</text><rect x="663.26" y="12.3" width="1.6" height="1.7" fill="#5c5c5c"/><rect x="670.71" y="10.8" width="1.3" height="4.6" fill="#5c5c5c"/><rect x="678.16" y="12.3" width="1.6" height="1.7" fill="#5c5c5c"/><text x="686.49" y="16.6" font-family="Liberation Sans" font-size="9.2" fill="#5c5c5c" text-anchor="middle">13</text><rect x="693.49" y="12.3" width="1.6" height="1.7" fill="#5c5c5c"/><rect x="700.94" y="10.8" width="1.3" height="4.6" fill="#5c5c5c"/><rect x="708.39" y="12.3" width="1.6" height="1.7" fill="#5c5c5c"/><text x="716.72" y="16.6" font-family="Liberation Sans" font-size="9.2" fill="#5c5c5c" text-anchor="middle">14</text><rect x="723.72" y="12.3" width="1.6" height="1.7" fill="#5c5c5c"/><rect x="731.17" y="10.8" width="1.3" height="4.6" fill="#5c5c5c"/><rect x="738.62" y="12.3" width="1.6" height="1.7" fill="#5c5c5c"/><text x="746.95" y="16.6" font-family="Liberation Sans" font-size="9.2" fill="#5c5c5c" text-anchor="middle">15</text><rect x="753.95" y="12.3" width="1.6" height="1.7" fill="#5c5c5c"/><rect x="761.40" y="10.8" width="1.3" height="4.6" fill="#5c5c5c"/><rect x="768.85" y="12.3" width="1.6" height="1.7" fill="#5c5c5c"/><text x="777.18" y="16.6" font-family="Liberation Sans" font-size="9.2" fill="#5c5c5c" text-anchor="middle">16</text><rect x="784.18" y="12.3" width="1.6" height="1.7" fill="#5c5c5c"/><rect x="791.63" y="10.8" width="1.3" height="4.6" fill="#5c5c5c"/><rect x="799.08" y="12.3" width="1.6" height="1.7" fill="#5c5c5c"/><text x="807.41" y="16.6" font-family="Liberation Sans" font-size="9.2" fill="#5c5c5c" text-anchor="middle">17</text><rect x="814.41" y="12.3" width="1.6" height="1.7" fill="#5c5c5c"/><rect x="821.86" y="10.8" width="1.3" height="4.6" fill="#5c5c5c"/><rect x="829.31" y="12.3" width="1.6" height="1.7" fill="#5c5c5c"/><text x="837.64" y="16.6" font-family="Liberation Sans" font-size="9.2" fill="#5c5c5c" text-anchor="middle">18</text><rect x="844.64" y="12.3" width="1.6" height="1.7" fill="#5c5c5c"/><rect x="852.09" y="10.8" width="1.3" height="4.6" fill="#5c5c5c"/><rect x="859.54" y="12.3" width="1.6" height="1.7" fill="#5c5c5c"/><text x="867.87" y="16.6" font-family="Liberation Sans" font-size="9.2" fill="#5c5c5c" text-anchor="middle">19</text><rect x="874.87" y="12.3" width="1.6" height="1.7" fill="#5c5c5c"/><rect x="882.32" y="10.8" width="1.3" height="4.6" fill="#5c5c5c"/><rect x="889.77" y="12.3" width="1.6" height="1.7" fill="#5c5c5c"/><text x="898.10" y="16.6" font-family="Liberation Sans" font-size="9.2" fill="#5c5c5c" text-anchor="middle">20</text><rect x="905.10" y="12.3" width="1.6" height="1.7" fill="#5c5c5c"/><rect x="912.55" y="10.8" width="1.3" height="4.6" fill="#5c5c5c"/><rect x="920.00" y="12.3" width="1.6" height="1.7" fill="#5c5c5c"/><text x="928.33" y="16.6" font-family="Liberation Sans" font-size="9.2" fill="#5c5c5c" text-anchor="middle">21</text><rect x="935.33" y="12.3" width="1.6" height="1.7" fill="#5c5c5c"/><rect x="942.78" y="10.8" width="1.3" height="4.6" fill="#5c5c5c"/><rect x="950.23" y="12.3" width="1.6" height="1.7" fill="#5c5c5c"/><text x="958.56" y="16.6" font-family="Liberation Sans" font-size="9.2" fill="#5c5c5c" text-anchor="middle">22</text><rect x="965.56" y="12.3" width="1.6" height="1.7" fill="#5c5c5c"/><rect x="973.01" y="10.8" width="1.3" height="4.6" fill="#5c5c5c"/><rect x="980.46" y="12.3" width="1.6" height="1.7" fill="#5c5c5c"/><text x="988.79" y="16.6" font-family="Liberation Sans" font-size="9.2" fill="#5c5c5c" text-anchor="middle">23</text><rect x="995.79" y="12.3" width="1.6" height="1.7" fill="#5c5c5c"/><rect x="1003.24" y="10.8" width="1.3" height="4.6" fill="#5c5c5c"/><rect x="1010.69" y="12.3" width="1.6" height="1.7" fill="#5c5c5c"/><text x="1019.02" y="16.6" font-family="Liberation Sans" font-size="9.2" fill="#5c5c5c" text-anchor="middle">24</text><rect x="1026.02" y="12.3" width="1.6" height="1.7" fill="#5c5c5c"/><rect x="1033.47" y="10.8" width="1.3" height="4.6" fill="#5c5c5c"/><rect x="1040.92" y="12.3" width="1.6" height="1.7" fill="#5c5c5c"/><text x="1049.25" y="16.6" font-family="Liberation Sans" font-size="9.2" fill="#5c5c5c" text-anchor="middle">25</text><rect x="1056.25" y="12.3" width="1.6" height="1.7" fill="#5c5c5c"/><rect x="1063.70" y="10.8" width="1.3" height="4.6" fill="#5c5c5c"/><rect x="1071.15" y="12.3" width="1.6" height="1.7" fill="#5c5c5c"/><text x="1079.48" y="16.6" font-family="Liberation Sans" font-size="9.2" fill="#5c5c5c" text-anchor="middle">26</text><rect x="1086.48" y="12.3" width="1.6" height="1.7" fill="#5c5c5c"/><rect x="1093.93" y="10.8" width="1.3" height="4.6" fill="#5c5c5c"/><rect x="1101.38" y="12.3" width="1.6" height="1.7" fill="#5c5c5c"/><text x="1109.71" y="16.6" font-family="Liberation Sans" font-size="9.2" fill="#5c5c5c" text-anchor="middle">27</text><rect x="1116.71" y="12.3" width="1.6" height="1.7" fill="#5c5c5c"/><rect x="1124.16" y="10.8" width="1.3" height="4.6" fill="#5c5c5c"/><rect x="330.80" y="21" width="1" height="3" fill="#6b7a90"/><rect x="368.60" y="21" width="1" height="3" fill="#6b7a90"/><rect x="406.40" y="21" width="1" height="3" fill="#6b7a90"/><rect x="444.20" y="21" width="1" height="3" fill="#6b7a90"/><rect x="482.00" y="21" width="1" height="3" fill="#6b7a90"/><rect x="519.80" y="21" width="1" height="3" fill="#6b7a90"/><rect x="557.60" y="21" width="1" height="3" fill="#6b7a90"/><rect x="595.40" y="21" width="1" height="3" fill="#6b7a90"/><rect x="633.20" y="21" width="1" height="3" fill="#6b7a90"/><rect x="671.00" y="21" width="1" height="3" fill="#6b7a90"/><rect x="708.80" y="21" width="1" height="3" fill="#6b7a90"/><rect x="746.60" y="21" width="1" height="3" fill="#6b7a90"/><rect x="784.40" y="21" width="1" height="3" fill="#6b7a90"/><rect x="822.20" y="21" width="1" height="3" fill="#6b7a90"/><rect x="860.00" y="21" width="1" height="3" fill="#6b7a90"/><rect x="897.80" y="21" width="1" height="3" fill="#6b7a90"/><rect x="935.60" y="21" width="1" height="3" fill="#6b7a90"/><rect x="973.40" y="21" width="1" height="3" fill="#6b7a90"/><rect x="1011.20" y="21" width="1" height="3" fill="#6b7a90"/><rect x="1049.00" y="21" width="1" height="3" fill="#6b7a90"/><defs><linearGradient id="hg" x1="0" y1="0" x2="0" y2="1"><stop offset="0" stop-color="#fff"/><stop offset="1" stop-color="#c2cedd"/></linearGradient></defs><path d="M289.5 4.7 H297.5 V6.8 L293.5 11.8 L289.5 6.8 Z" fill="url(#hg)" stroke="#4a73b5" stroke-width="1"/><path d="M293.5 11.8 L297.5 16.5 V19 H289.5 V16.5 Z" fill="url(#hg)" stroke="#4a73b5" stroke-width="1"/><rect x="289.5" y="19.5" width="8" height="5.6" fill="url(#hg)" stroke="#4a73b5" stroke-width="1"/><path d="M1068.5 19.3 V15.5 L1072.5 11.8 L1076.5 15.5 V19.3 Z" fill="url(#hg)" stroke="#4a73b5" stroke-width="1"/></svg>
<div id="leftcol" class="a"></div>
<div id="docarea" class="a"></div>
<svg class="a" style="left:24px;top:166px" width="240" height="140" viewBox="0 0 240 140"><path d="M0 0 H240 V17 L208 24 Q85 50 0 93 Z" fill="#fff" fill-opacity=".17"/><path d="M0 93 Q85 50 208 24 V27 Q95 55 0 115 Z" fill="#fff" fill-opacity=".07"/><path d="M0 115 Q95 55 208 27" fill="none" stroke="#fff" stroke-opacity=".15" stroke-width="1.2"/></svg>
<div class="a" style="left:5px;top:169px;width:14px;height:514px;background:#fff;border:1px solid #c9dcf4"></div>
<div class="a" style="left:5px;top:169px;width:14px;height:4px;background:#b3cdee"></div>
<div class="a" style="left:5px;top:677px;width:14px;height:6px;background:#b3cdee;border:1px solid #c9dcf4"></div>
<svg class="a" style="left:0;top:0" width="24" height="706" viewBox="0 0 24 706"><rect x="11.2" y="178.00" width="1.7" height="1.6" fill="#5c5c5c"/><rect x="9.7" y="185.65" width="4.6" height="1.3" fill="#5c5c5c"/><rect x="11.2" y="193.10" width="1.7" height="1.6" fill="#5c5c5c"/><text transform="translate(15.6 201.43) rotate(-90)" font-family="Liberation Sans" font-size="9.2" fill="#5c5c5c" text-anchor="middle">1</text><rect x="11.2" y="208.23" width="1.7" height="1.6" fill="#5c5c5c"/><rect x="9.7" y="215.88" width="4.6" height="1.3" fill="#5c5c5c"/><rect x="11.2" y="223.33" width="1.7" height="1.6" fill="#5c5c5c"/><text transform="translate(15.6 231.66) rotate(-90)" font-family="Liberation Sans" font-size="9.2" fill="#5c5c5c" text-anchor="middle">2</text><rect x="11.2" y="238.46" width="1.7" height="1.6" fill="#5c5c5c"/><rect x="9.7" y="246.11" width="4.6" height="1.3" fill="#5c5c5c"/><rect x="11.2" y="253.56" width="1.7" height="1.6" fill="#5c5c5c"/><text transform="translate(15.6 261.89) rotate(-90)" font-family="Liberation Sans" font-size="9.2" fill="#5c5c5c" text-anchor="middle">3</text><rect x="11.2" y="268.69" width="1.7" height="1.6" fill="#5c5c5c"/><rect x="9.7" y="276.34" width="4.6" height="1.3" fill="#5c5c5c"/><rect x="11.2" y="283.79" width="1.7" height="1.6" fill="#5c5c5c"/><text transform="translate(15.6 292.12) rotate(-90)" font-family="Liberation Sans" font-size="9.2" fill="#5c5c5c" text-anchor="middle">4</text><rect x="11.2" y="298.92" width="1.7" height="1.6" fill="#5c5c5c"/><rect x="9.7" y="306.57" width="4.6" height="1.3" fill="#5c5c5c"/><rect x="11.2" y="314.02" width="1.7" height="1.6" fill="#5c5c5c"/><text transform="translate(15.6 322.35) rotate(-90)" font-family="Liberation Sans" font-size="9.2" fill="#5c5c5c" text-anchor="middle">5</text><rect x="11.2" y="329.15" width="1.7" height="1.6" fill="#5c5c5c"/><rect x="9.7" y="336.80" width="4.6" height="1.3" fill="#5c5c5c"/><rect x="11.2" y="344.25" width="1.7" height="1.6" fill="#5c5c5c"/><text transform="translate(15.6 352.58) rotate(-90)" font-family="Liberation Sans" font-size="9.2" fill="#5c5c5c" text-anchor="middle">6</text><rect x="11.2" y="359.38" width="1.7" height="1.6" fill="#5c5c5c"/><rect x="9.7" y="367.03" width="4.6" height="1.3" fill="#5c5c5c"/><rect x="11.2" y="374.48" width="1.7" height="1.6" fill="#5c5c5c"/><text transform="translate(15.6 382.81) rotate(-90)" font-family="Liberation Sans" font-size="9.2" fill="#5c5c5c" text-anchor="middle">7</text><rect x="11.2" y="389.61" width="1.7" height="1.6" fill="#5c5c5c"/><rect x="9.7" y="397.26" width="4.6" height="1.3" fill="#5c5c5c"/><rect x="11.2" y="404.71" width="1.7" height="1.6" fill="#5c5c5c"/><text transform="translate(15.6 413.04) rotate(-90)" font-family="Liberation Sans" font-size="9.2" fill="#5c5c5c" text-anchor="middle">8</text><rect x="11.2" y="419.84" width="1.7" height="1.6" fill="#5c5c5c"/><rect x="9.7" y="427.49" width="4.6" height="1.3" fill="#5c5c5c"/><rect x="11.2" y="434.94" width="1.7" height="1.6" fill="#5c5c5c"/><text transform="translate(15.6 443.27) rotate(-90)" font-family="Liberation Sans" font-size="9.2" fill="#5c5c5c" text-anchor="middle">9</text><rect x="11.2" y="450.07" width="1.7" height="1.6" fill="#5c5c5c"/><rect x="9.7" y="457.72" width="4.6" height="1.3" fill="#5c5c5c"/><rect x="11.2" y="465.17" width="1.7" height="1.6" fill="#5c5c5c"/><text transform="translate(15.6 473.50) rotate(-90)" font-family="Liberation Sans" font-size="9.2" fill="#5c5c5c" text-anchor="middle">10</text><rect x="11.2" y="480.30" width="1.7" height="1.6" fill="#5c5c5c"/><rect x="9.7" y="487.95" width="4.6" height="1.3" fill="#5c5c5c"/><rect x="11.2" y="495.40" width="1.7" height="1.6" fill="#5c5c5c"/><text transform="translate(15.6 503.73) rotate(-90)" font-family="Liberation Sans" font-size="9.2" fill="#5c5c5c" text-anchor="middle">11</text><rect x="11.2" y="510.53" width="1.7" height="1.6" fill="#5c5c5c"/><rect x="9.7" y="518.18" width="4.6" height="1.3" fill="#5c5c5c"/><rect x="11.2" y="525.63" width="1.7" height="1.6" fill="#5c5c5c"/><text transform="translate(15.6 533.96) rotate(-90)" font-family="Liberation Sans" font-size="9.2" fill="#5c5c5c" text-anchor="middle">12</text><rect x="11.2" y="540.76" width="1.7" height="1.6" fill="#5c5c5c"/><rect x="9.7" y="548.41" width="4.6" height="1.3" fill="#5c5c5c"/><rect x="11.2" y="555.86" width="1.7" height="1.6" fill="#5c5c5c"/><text transform="translate(15.6 564.19) rotate(-90)" font-family="Liberation Sans" font-size="9.2" fill="#5c5c5c" text-anchor="middle">13</text><rect x="11.2" y="570.99" width="1.7" height="1.6" fill="#5c5c5c"/><rect x="9.7" y="578.64" width="4.6" height="1.3" fill="#5c5c5c"/><rect x="11.2" y="586.09" width="1.7" height="1.6" fill="#5c5c5c"/><text transform="translate(15.6 594.42) rotate(-90)" font-family="Liberation Sans" font-size="9.2" fill="#5c5c5c" text-anchor="middle">14</text><rect x="11.2" y="601.22" width="1.7" height="1.6" fill="#5c5c5c"/><rect x="9.7" y="608.87" width="4.6" height="1.3" fill="#5c5c5c"/><rect x="11.2" y="616.32" width="1.7" height="1.6" fill="#5c5c5c"/><text transform="translate(15.6 624.65) rotate(-90)" font-family="Liberation Sans" font-size="9.2" fill="#5c5c5c" text-anchor="middle">15</text><rect x="11.2" y="631.45" width="1.7" height="1.6" fill="#5c5c5c"/><rect x="9.7" y="639.10" width="4.6" height="1.3" fill="#5c5c5c"/><rect x="11.2" y="646.55" width="1.7" height="1.6" fill="#5c5c5c"/><text transform="translate(15.6 654.88) rotate(-90)" font-family="Liberation Sans" font-size="9.2" fill="#5c5c5c" text-anchor="middle">16</text><rect x="11.2" y="661.68" width="1.7" height="1.6" fill="#5c5c5c"/><rect x="9.7" y="669.33" width="4.6" height="1.3" fill="#5c5c5c"/></svg>
<div id="page" class="a"></div>
<div class="a" style="left:294px;top:174px;width:2px;height:14px;background:#000"></div>

<div class="a" style="left:1343px;top:142px;width:17px;height:564px;background:#a8c5ec"></div>
<div class="a" style="left:1343px;top:142px;width:17px;height:23px;background:#a6c3ea"></div>
<div class="a" style="left:1347px;top:144px;width:9px;height:2.5px;background:#2f3d55"></div>
<div class="a" style="left:1343px;top:148px;width:17px;height:17px;background:#c4cad6;border:1px solid #959db0"></div>
<svg class="a" style="left:1343px;top:148px" width="17" height="17" viewBox="0 0 17 17">
<path d="M2.5 4.5 H3.5 V2.5 H7.5 V4.5 H13.5 V11.5 H11.5 V13.5 H7.5 V11.5 H2.5 Z" fill="#f6eef4" stroke="#1f2d45" stroke-width="1.1"/>
<path d="M4 3.2 L5.5 5.5 L7 3.2" fill="#fff" stroke="#1f2d45" stroke-width=".9"/>
<path d="M8 12.5 L9.5 10 L11 12.5" fill="#fff" stroke="#1f2d45" stroke-width=".9"/>
<path d="M7.5 6.5 V8 M11.5 6.5 V8" stroke="#2f3d55" stroke-width="1"/>
</svg>
<div class="a" style="left:1344px;top:165px;width:15px;height:17px;background:#7d9ccb"></div>
<svg class="a" style="left:1343px;top:165px" width="17" height="17" viewBox="0 0 17 17"><path d="M4 11 L8.5 6.5 L13 11Z" fill="#3d4b6a"/></svg>
<div class="a" style="left:1344px;top:182px;width:15px;height:454px;border:1px solid #55658a;border-radius:2px;background:linear-gradient(90deg,#e9edf2 0%,#e6ebf1 40%,#c9d3e1 60%,#bcc8da 90%,#dfe6ef 100%);box-shadow:-1px 0 0 #b5d0f5"></div>
<svg class="a" style="left:1343px;top:400px" width="17" height="14" viewBox="0 0 17 14"><path d="M5 5.3 H13 M5 7.3 H13 M5 9.3 H13 M5 11.3 H13" stroke="#6a6a6a" stroke-width="1"/></svg>
<div class="a" style="left:1344px;top:636px;width:15px;height:19px;background:#7d9ccb"></div>
<svg class="a" style="left:1343px;top:636px" width="17" height="19" viewBox="0 0 17 19"><path d="M4 8 L8.5 12.5 L13 8Z" fill="#3d4b6a"/></svg>
<svg class="a" style="left:1343px;top:655px" width="17" height="51" viewBox="0 0 17 51">
<path d="M4.8 8 L7.6 5 L10.4 8Z M4.8 10.8 L7.6 7.8 L10.4 10.8Z" fill="#111"/><rect x="4.8" y="10.4" width="5.6" height="1.1" fill="#111"/>
<defs><radialGradient id="nb" cx=".4" cy=".35" r=".7"><stop offset="0" stop-color="#f4f4f4"/><stop offset="1" stop-color="#888"/></radialGradient></defs>
<circle cx="7.5" cy="24.4" r="3" fill="url(#nb)" stroke="#111" stroke-width="1.1"/>
<rect x="4.8" y="38.9" width="5.6" height="1.1" fill="#111"/><path d="M4.8 39.8 L7.6 42.8 L10.4 39.8Z M4.8 42.6 L7.6 45.6 L10.4 42.6Z" fill="#111"/>
</svg>
<div id="status" class="a"></div>
<div class="rt" style="left:8px;top:712px;font-size:11.3px;color:#15326b;letter-spacing:.05px">Страница: 1 из 1</div>
<div class="a" style="left:104px;top:707px;width:1px;height:21px;background:#a9c2e2;border-right:1px solid #f4f8fd"></div>
<div class="rt" style="left:114.5px;top:712px;font-size:10.9px;color:#15326b">Число слов: 0</div>
<div class="a" style="left:193px;top:707px;width:1px;height:21px;background:#a9c2e2;border-right:1px solid #f4f8fd"></div>
<svg class="a" style="left:201px;top:708px" width="18" height="17" viewBox="0 0 18 17">
<path d="M1.5 10 L8 6.5 L16 9.5 L9.5 14 Z" fill="#eef2f8" stroke="#4d63a0" stroke-width="1"/>
<path d="M1.5 10 L1.5 12 L9.5 16 L16 11.5 V9.5" fill="none" stroke="#4d63a0" stroke-width="1.2"/>
<path d="M5 6.5 L8 10 L15 1.5" fill="none" stroke="#3b6fd8" stroke-width="2.2"/>
</svg>
<div class="rt" style="left:235.5px;top:712px;font-size:10.9px;color:#15326b">Русский (Россия)</div>
<div class="a" style="left:329px;top:707px;width:1px;height:21px;background:#a9c2e2;border-right:1px solid #f4f8fd"></div>
<div class="a" style="left:1078px;top:707px;width:1px;height:21px;background:#a9c2e2;border-right:1px solid #f4f8fd"></div>
<div class="a" style="left:1084px;top:708px;width:92px;height:18px;border:1px solid #a9c2e2;border-radius:3px;background:linear-gradient(#e4eefa,#d3e3f6 50%,#c6daf2 51%,#d5e5f7)"></div>
<div class="a" style="left:1085px;top:709px;width:18px;height:16px;background:linear-gradient(#fbe0a8,#fbc062 45%,#f9a83a 55%,#fddc8a);border-right:1px solid #d9b87a"></div>
<div class="a" style="left:1120px;top:709px;width:1px;height:16px;background:#b9cfe9"></div>
<div class="a" style="left:1138px;top:709px;width:1px;height:16px;background:#b9cfe9"></div>
<div class="a" style="left:1156px;top:709px;width:1px;height:16px;background:#b9cfe9"></div>
<svg class="a" style="left:1084px;top:708px" width="92" height="18" viewBox="0 0 92 18">
<rect x="5.5" y="4.5" width="10" height="10" fill="#fff" stroke="#3a3a3a" stroke-width="1.2"/>
<path d="M7.5 6.5 H13.5 M7.5 8.5 H13.5 M7.5 10.5 H13.5 M7.5 12.5 H13.5" stroke="#555" stroke-width="1"/>
<path d="M23.5 4.5 H28.5 L29 5.5 L29.5 4.5 H34.5 V14.5 H30 L29 15.5 L28 14.5 H23.5Z" fill="#fff" stroke="#444" stroke-width="1.1"/>
<path d="M29 5.5 V15" stroke="#666" stroke-width=".8"/>
<path d="M25 6.5 H28 M25 8.5 H28 M25 10.5 H28 M25 12.5 H28 M30 6.5 H33 M30 8.5 H33 M30 10.5 H33 M30 12.5 H33" stroke="#666" stroke-width="1"/>
<rect x="40.5" y="4.5" width="9.5" height="9" fill="#fff" stroke="#3a3a3a" stroke-width="1.2"/>
<path d="M42.5 6.5 H48 M42.5 8.5 H48 M42.5 10.5 H46" stroke="#555" stroke-width="1"/>
<circle cx="48.3" cy="12.2" r="3.3" fill="#2f8ad8" stroke="#1a3a90" stroke-width=".8"/><path d="M46 11.5 Q47.5 10 48.6 11.5 Q48 13.6 46.4 13.2Z M49.5 13.8 Q50.8 12.6 51.2 14Z" fill="#3aa83a"/>
<path d="M60 4.5 H62 M60 9.5 H62 M60 14.5 H62 M63.5 4.5 H70 M63.5 7 H70 M63.5 9.5 H70 M63.5 12 H70 M63.5 14.5 H70" stroke="#555" stroke-width="1"/>
<path d="M77.5 4.5 H88 M77.5 6.5 H88 M77.5 8.5 H88 M77.5 10.5 H88 M77.5 12.5 H88 M77.5 14.5 H88" stroke="#555" stroke-width="1"/>
</svg>
<div class="rt" style="left:1184.5px;top:711.5px;font-size:11.2px;color:#15326b;letter-spacing:.2px">80%</div>
<svg class="a" style="left:1218px;top:707px" width="142" height="21" viewBox="0 0 142 21">
<defs><linearGradient id="zc" x1="0" y1="0" x2="0" y2="1"><stop offset="0" stop-color="#f5f8fc"/><stop offset=".5" stop-color="#d8e3f0"/><stop offset="1" stop-color="#c2d2e6"/></linearGradient></defs>
<path d="M19 10.5 H121" stroke="#8ea4c2" stroke-width="1"/><path d="M19 11.5 H121" stroke="#f4f8fc" stroke-width="1"/>
<path d="M71 7 V14" stroke="#8ea4c2" stroke-width="1"/>
<circle cx="11" cy="10.5" r="7.6" fill="url(#zc)" stroke="#5f6f86" stroke-width="1"/>
<rect x="6.5" y="9.3" width="9" height="2.4" fill="#3d4c60"/>
<circle cx="129" cy="10.5" r="7.6" fill="url(#zc)" stroke="#5f6f86" stroke-width="1"/>
<rect x="124.5" y="9.3" width="9" height="2.4" fill="#3d4c60"/><rect x="127.8" y="6" width="2.4" height="9" fill="#3d4c60"/>
<path d="M55 4.5 H62 V13 L58.5 16.5 L55 13 Z" fill="url(#zc)" stroke="#5f6f86" stroke-width="1"/>
<path d="M57.5 6.5 V12 M59.5 6.5 V12" stroke="#8a9ab0" stroke-width=".7"/>
</svg>
<div id="taskbar" class="a"></div>
<div class="a" style="left:0;top:728px;width:1360px;height:1px;background:#3b4455"></div>
<div class="a" style="left:0;top:729px;width:1360px;height:1px;background:#c6d2e0;opacity:.7"></div>
<!-- start orb -->
<svg class="a" style="left:7px;top:728px" width="40" height="40" viewBox="0 0 40 40">
<defs>
<radialGradient id="so" cx=".5" cy=".95" r=".75"><stop offset="0" stop-color="#3ff0ff"/><stop offset=".3" stop-color="#1a9ad8"/><stop offset=".6" stop-color="#0d4f8e"/><stop offset="1" stop-color="#0a2f5e"/></radialGradient>
<linearGradient id="sg" x1="0" y1="0" x2="0" y2="1"><stop offset="0" stop-color="#fff" stop-opacity=".8"/><stop offset="1" stop-color="#fff" stop-opacity=".15"/></linearGradient>
</defs>
<circle cx="19.8" cy="20" r="17.8" fill="url(#so)" stroke="#163a62" stroke-width="1.2"/>
<circle cx="19.8" cy="20" r="18.6" fill="none" stroke="#e6eef6" stroke-opacity=".55" stroke-width=".8"/>
<path d="M4 17 Q6 4 19.8 3.5 Q33.6 4 35.6 17 Q28 14 19.8 14.5 Q11.6 14 4 17Z" fill="url(#sg)" opacity=".7"/>
<path d="M11 9.5 Q15 7.8 21.3 9.5 L19.6 18.4 Q14 16.8 9.4 18.6 Z" fill="#f0602a"/>
<path d="M20.8 12 Q26 13 32.6 11.6 L31 21 Q25.5 22.2 19.5 20.5 Z" fill="#8ccc42"/>
<path d="M8 19 Q12.8 17.2 19 19 L17.5 28.3 Q12.5 26.6 6.6 28.4 Z" fill="#30a2e8"/>
<path d="M18.2 21.2 Q23.6 22.8 30.4 21.2 L28.8 30.8 Q23 32.4 16.8 30.6 Z" fill="#fdc21a"/>
</svg>
<svg class="a" style="left:56px;top:731px" width="12" height="34" viewBox="0 0 12 34">
<g fill="#2a2f38">
<rect x="2.2" y="1.6" width="1.8" height="1.8"/><rect x="5.3" y="1.6" width="1.8" height="1.8"/><rect x="8.4" y="1.6" width="1.8" height="1.8"/><rect x="2.2" y="5.7" width="1.8" height="1.8"/><rect x="5.3" y="5.7" width="1.8" height="1.8"/><rect x="8.4" y="5.7" width="1.8" height="1.8"/><rect x="2.2" y="9.8" width="1.8" height="1.8"/><rect x="5.3" y="9.8" width="1.8" height="1.8"/><rect x="8.4" y="9.8" width="1.8" height="1.8"/><rect x="2.2" y="13.9" width="1.8" height="1.8"/><rect x="5.3" y="13.9" width="1.8" height="1.8"/><rect x="8.4" y="13.9" width="1.8" height="1.8"/><rect x="2.2" y="18.0" width="1.8" height="1.8"/><rect x="5.3" y="18.0" width="1.8" height="1.8"/><rect x="8.4" y="18.0" width="1.8" height="1.8"/><rect x="2.2" y="22.1" width="1.8" height="1.8"/><rect x="5.3" y="22.1" width="1.8" height="1.8"/><rect x="8.4" y="22.1" width="1.8" height="1.8"/><rect x="2.2" y="26.2" width="1.8" height="1.8"/><rect x="5.3" y="26.2" width="1.8" height="1.8"/><rect x="8.4" y="26.2" width="1.8" height="1.8"/><rect x="2.2" y="30.3" width="1.8" height="1.8"/><rect x="5.3" y="30.3" width="1.8" height="1.8"/><rect x="8.4" y="30.3" width="1.8" height="1.8"/></g><g fill="#dfe6ee" opacity=".6"><rect x="3.6" y="3.0" width="1" height="1"/><rect x="6.7" y="3.0" width="1" height="1"/><rect x="9.8" y="3.0" width="1" height="1"/><rect x="3.6" y="7.1" width="1" height="1"/><rect x="6.7" y="7.1" width="1" height="1"/><rect x="9.8" y="7.1" width="1" height="1"/><rect x="3.6" y="11.2" width="1" height="1"/><rect x="6.7" y="11.2" width="1" height="1"/><rect x="9.8" y="11.2" width="1" height="1"/><rect x="3.6" y="15.3" width="1" height="1"/><rect x="6.7" y="15.3" width="1" height="1"/><rect x="9.8" y="15.3" width="1" height="1"/><rect x="3.6" y="19.4" width="1" height="1"/><rect x="6.7" y="19.4" width="1" height="1"/><rect x="9.8" y="19.4" width="1" height="1"/><rect x="3.6" y="23.5" width="1" height="1"/><rect x="6.7" y="23.5" width="1" height="1"/><rect x="9.8" y="23.5" width="1" height="1"/><rect x="3.6" y="27.6" width="1" height="1"/><rect x="6.7" y="27.6" width="1" height="1"/><rect x="9.8" y="27.6" width="1" height="1"/><rect x="3.6" y="31.7" width="1" height="1"/><rect x="6.7" y="31.7" width="1" height="1"/><rect x="9.8" y="31.7" width="1" height="1"/></g></svg>
<!-- paint -->
<svg class="a" style="left:88px;top:732px" width="34" height="33" viewBox="0 0 34 33">
<defs><linearGradient id="pp" x1="0" y1="0" x2="1" y2="1"><stop offset="0" stop-color="#eaf6fd"/><stop offset="1" stop-color="#a8d2ee"/></linearGradient></defs>
<path d="M3 17 Q2 9 12 6 Q22 3 27 8 Q31 12 28 19 Q26 24 20 23 Q17 22.5 15.5 25 Q13 29 8.5 27.5 Q3.5 25 3 17Z" fill="url(#pp)" stroke="#4f8ebe" stroke-width="1"/>
<circle cx="7.8" cy="16" r="2.3" fill="#e53935"/><circle cx="12.2" cy="11" r="2.2" fill="#43b02a"/><circle cx="17.8" cy="9" r="2.2" fill="#f5a623"/><circle cx="12" cy="20" r="1.8" fill="none" stroke="#5c8fc0" stroke-width="1"/>
<path d="M26 5 L13.5 30" stroke="#c9641a" stroke-width="2.4" stroke-linecap="round"/><path d="M26 5 L14 29" stroke="#f39a3a" stroke-width="1.2"/>
<path d="M23.5 6 L28 .5 L32.5 3.5 L28 8.5Z" fill="#c9a070" stroke="#8a6a40" stroke-width=".6"/>
</svg>
<!-- media player -->
<svg class="a" style="left:152px;top:736px" width="30" height="27" viewBox="0 0 30 27">
<rect x="5" y="2.5" width="22" height="22.5" fill="#bfe0f4" stroke="#6aa6d0" stroke-width=".8"/>
<rect x="3" y="1.5" width="21" height="23" fill="#a9d5f0" stroke="#5e9ccc" stroke-width=".8"/>
<rect x="1" y=".8" width="21" height="24" fill="#b7ddf3" stroke="#4f90c4" stroke-width=".8"/>
<circle cx="11.6" cy="12.8" r="8.6" fill="#f37021"/><circle cx="11.6" cy="12.8" r="8.6" fill="none" stroke="#d85a10" stroke-width=".8"/>
<path d="M8.6 7.8 L16.6 12.8 L8.6 17.8Z" fill="#fff"/>
</svg>
<!-- office tool -->
<svg class="a" style="left:213px;top:731px" width="32" height="34" viewBox="0 0 32 34">
<rect x="4" y="2" width="26" height="30" fill="#f6f8fb" stroke="#6b7b90" stroke-width="1"/>
<rect x="4" y="2" width="26" height="4" fill="#f3b54a"/>
<rect x="6" y="29" width="24" height="3" fill="#c9d3e0" stroke="#6b7b90" stroke-width=".6"/>
<path d="M16 12 H24 M16 15 H24 M12 21 H18 M12 24 H18" stroke="#8aa6d0" stroke-width="1"/>
<rect x="1.5" y="6.5" width="12" height="11" rx="1.5" fill="#fff" stroke="#e84a2f" stroke-width="1.3"/>
<rect x="4" y="8.5" width="11" height="10" rx="1.5" fill="#e84a2f"/>
<circle cx="9.5" cy="13.5" r="3" fill="none" stroke="#fff" stroke-width="1.4"/>
<path d="M18 21 Q22 19 30 21 V30 Q24 28 18 30Z" fill="#d9b773" stroke="#8a6a30" stroke-width=".6"/>
<path d="M23.5 21 V27" stroke="#222" stroke-width="1.6"/><circle cx="23.5" cy="29" r="1" fill="#222"/><path d="M21.5 22.5 H25.5" stroke="#222" stroke-width="1"/>
</svg>
<!-- orange film -->
<svg class="a" style="left:275px;top:732px" width="32" height="32" viewBox="0 0 32 32">
<circle cx="16" cy="16" r="15.9" fill="#ff5a1e"/>
<g fill="#a6bcd8"><circle cx="10" cy="10" r="4.2"/><circle cx="22" cy="10" r="4.2"/><circle cx="10" cy="22" r="4.2"/><circle cx="22" cy="22" r="4.2"/><circle cx="16" cy="16" r="1.7"/></g>
</svg>
<!-- explorer -->
<div class="tbb" style="left:323px;width:60px"></div>
<svg class="a" style="left:336px;top:733px" width="34" height="30" viewBox="0 0 34 30">
<defs><linearGradient id="fd" x1="0" y1="0" x2="0" y2="1"><stop offset="0" stop-color="#fff3c0"/><stop offset="1" stop-color="#e8c96a"/></linearGradient>
<linearGradient id="fb" x1="0" y1="0" x2="0" y2="1"><stop offset="0" stop-color="#c9ecff"/><stop offset="1" stop-color="#4aa6e0"/></linearGradient></defs>
<path d="M1.5 5 H10 L12 3 H28 V25 H1.5Z" fill="#f0d57a" stroke="#b89440" stroke-width=".8"/>
<rect x="5" y="1.5" width="6" height="4" fill="#fff" stroke="#999" stroke-width=".4"/><rect x="5.5" y="2" width="2.2" height="1.6" fill="#2fb02f"/>
<rect x="13" y="3.5" width="7" height="4" fill="#fff" stroke="#999" stroke-width=".4"/><rect x="13.5" y="4" width="2.2" height="1.6" fill="#d02a2a"/>
<rect x="19.5" y="5.5" width="9" height="4" fill="#fff" stroke="#999" stroke-width=".4"/><rect x="20" y="6" width="2.2" height="1.6" fill="#2a8ad0"/>
<path d="M1 9 H31 V26 H1Z" fill="url(#fd)" stroke="#b89440" stroke-width=".8"/>
<path d="M5 17 Q5 14 8 14 H25 Q28 14 28 17 V26 H22 V20 H11 V26 H5Z" fill="url(#fb)" stroke="#3a86c0" stroke-width=".8"/>
<path d="M9 10 L7 17 M4 14 L11 13" stroke="#fff" stroke-width=".8" opacity=".9"/>
</svg>
<!-- yandex -->
<svg class="a" style="left:399px;top:733px" width="32" height="32" viewBox="0 0 32 32">
<defs><radialGradient id="yx" cx=".45" cy=".35" r=".7"><stop offset="0" stop-color="#fff"/><stop offset="1" stop-color="#d8dde4"/></radialGradient></defs>
<circle cx="16" cy="15" r="15" fill="url(#yx)"/>
<path d="M8.5 8 L16 17 L23.5 8 M16 17 V26" fill="none" stroke="#e0161b" stroke-width="2.8"/>
</svg>
<!-- skype -->
<div class="tbb" style="left:447px;width:60px"></div>
<svg class="a" style="left:460px;top:732px" width="34" height="34" viewBox="0 0 34 34">
<circle cx="11" cy="10" r="8" fill="#00aff0"/><circle cx="22" cy="22" r="8" fill="#00aff0"/><circle cx="16.5" cy="16" r="12.5" fill="#00aff0"/>
<text x="16.5" y="22.5" font-family="Liberation Sans" font-weight="bold" font-size="18" fill="#fff" text-anchor="middle">S</text>
<circle cx="27" cy="26" r="5.6" fill="#ffb400" stroke="#fff" stroke-width=".8"/>
<text x="27" y="29.2" font-family="Liberation Sans" font-weight="bold" font-size="8.5" fill="#111" text-anchor="middle">2</text>
</svg>
<!-- sync -->
<div class="tbb" style="left:509px;width:60px"></div>
<svg class="a" style="left:523px;top:733px" width="30" height="30" viewBox="0 0 30 30">
<defs><radialGradient id="sy" cx=".5" cy=".5" r=".55"><stop offset="0" stop-color="#5a8ac0"/><stop offset=".8" stop-color="#1e4a7e"/><stop offset="1" stop-color="#2a7a90"/></radialGradient></defs>
<circle cx="15" cy="15" r="14" fill="url(#sy)" stroke="#2f8aa0" stroke-width="1"/>
<path d="M13 5 Q7 10 9 19 L6.5 19 L11 25 L14.5 18 L12 18.5 Q11 12 14.5 8Z" fill="#6ab4f5"/>
<path d="M16 25 Q22 20 20.5 11 L23 11 L18.5 4.5 L15 11.5 L17.5 11 Q18.5 17.5 15 22Z" fill="#f07a20"/>
</svg>
<!-- IE -->
<div class="tbb" style="left:571px;width:55px"></div>
<div class="a" style="left:626px;top:729px;width:5px;height:38px;border:1px solid #5e6d84;border-left:none;border-radius:0 3px 3px 0;background:linear-gradient(#c6d3e4,#aabcd6)"></div>
<svg class="a" style="left:582px;top:731px" width="34" height="34" viewBox="0 0 34 34">
<defs><linearGradient id="ie" x1="0" y1="0" x2="0" y2="1"><stop offset="0" stop-color="#9fe0ff"/><stop offset="1" stop-color="#1c9be6"/></linearGradient></defs>
<path d="M17 5.5 A11.5 11.5 0 1 0 28.4 19 H21 A5.5 5.5 0 0 1 11 17.5 H28.6 Q28.8 16.8 28.8 16 A11.8 11.8 0 0 0 17 5.5 Z M11.2 13.5 A5.8 5.8 0 0 1 22.5 13.5 Z" fill="url(#ie)" stroke="#1a7ac0" stroke-width=".6"/>
<path d="M4 30 Q-1 24 11 12 Q25 -1 31 3 Q33 7 26 14" fill="none" stroke="#f5c518" stroke-width="2.3"/>
</svg>
<!-- firefox -->
<div class="tbb" style="left:633px;width:60px"></div>
<svg class="a" style="left:647px;top:732px" width="32" height="32" viewBox="0 0 32 32">
<defs><radialGradient id="ff" cx=".7" cy=".2" r=".9"><stop offset="0" stop-color="#ffe226"/><stop offset=".45" stop-color="#ff8a16"/><stop offset="1" stop-color="#e31587"/></radialGradient>
<radialGradient id="fg" cx=".4" cy=".35" r=".7"><stop offset="0" stop-color="#2f7dff"/><stop offset="1" stop-color="#5b1a9e"/></radialGradient></defs>
<circle cx="16" cy="17" r="14.5" fill="url(#ff)"/>
<circle cx="16.5" cy="16.5" r="7.5" fill="url(#fg)"/>
<path d="M5 13 Q9 7 15 9 Q11 12 13 16 Q16 20 21 18 Q18 24 12 23 Q6 21 5 13Z" fill="#ff7a1a"/>
<path d="M22 2 Q30 6 30 15 Q28 9 23 8Z" fill="#ffd21a"/>
</svg>
<!-- word -->
<div class="tbb" style="left:695.5px;width:51px;border-color:#3a4658;background:linear-gradient(#eef3f9,#d9e3ef 50%,#c9d6e7);box-shadow:inset 0 0 0 1px rgba(255,255,255,.8)"></div>
<div class="a" style="left:746.5px;top:729px;width:4px;height:38px;border:1px solid #4a5668;border-left:none;border-radius:0 3px 3px 0;background:linear-gradient(#d6e0ec,#b8c8dc)"></div>
<div class="a" style="left:750.5px;top:729px;width:4px;height:38px;border:1px solid #5e6d84;border-left:none;border-radius:0 3px 3px 0;background:linear-gradient(#c6d3e4,#aabcd6)"></div>
<svg class="a" style="left:704px;top:731px" width="34" height="33" viewBox="0 0 34 33">
<defs><linearGradient id="wd" x1="0" y1="0" x2="1" y2="0"><stop offset="0" stop-color="#1f4fb0"/><stop offset="1" stop-color="#6a9ae8"/></linearGradient></defs>
<path d="M3 4 Q8 1 22 1.5 V28 Q10 28 3 30Z" fill="url(#wd)" stroke="#143a86" stroke-width=".6"/>
<path d="M6 5 Q10 3 20 3.5 V26" fill="none" stroke="#fff" stroke-width=".8" opacity=".7"/>
<rect x="10.5" y="7" width="21" height="24" fill="#fff" stroke="#7a8aa6" stroke-width=".8" transform="rotate(3 21 19)"/>
<text x="17.5" y="17.5" font-family="Liberation Serif" font-weight="bold" font-style="italic" font-size="11" fill="#1f4fb0" text-anchor="middle">W</text>
<path d="M22 12 H28 M22 14.5 H28 M22 17 H28 M14 20 H29 M14 22.5 H29 M14 25 H29" stroke="#1f4fb0" stroke-width="1.3"/>
</svg>
<!-- tray -->
<svg class="a" style="left:1140px;top:731px" width="12" height="34" viewBox="0 0 12 34"><g fill="#2a2f38">
<rect x="2.2" y="1.6" width="1.8" height="1.8"/><rect x="5.3" y="1.6" width="1.8" height="1.8"/><rect x="8.4" y="1.6" width="1.8" height="1.8"/><rect x="2.2" y="5.7" width="1.8" height="1.8"/><rect x="5.3" y="5.7" width="1.8" height="1.8"/><rect x="8.4" y="5.7" width="1.8" height="1.8"/><rect x="2.2" y="9.8" width="1.8" height="1.8"/><rect x="5.3" y="9.8" width="1.8" height="1.8"/><rect x="8.4" y="9.8" width="1.8" height="1.8"/><rect x="2.2" y="13.9" width="1.8" height="1.8"/><rect x="5.3" y="13.9" width="1.8" height="1.8"/><rect x="8.4" y="13.9" width="1.8" height="1.8"/><rect x="2.2" y="18.0" width="1.8" height="1.8"/><rect x="5.3" y="18.0" width="1.8" height="1.8"/><rect x="8.4" y="18.0" width="1.8" height="1.8"/><rect x="2.2" y="22.1" width="1.8" height="1.8"/><rect x="5.3" y="22.1" width="1.8" height="1.8"/><rect x="8.4" y="22.1" width="1.8" height="1.8"/><rect x="2.2" y="26.2" width="1.8" height="1.8"/><rect x="5.3" y="26.2" width="1.8" height="1.8"/><rect x="8.4" y="26.2" width="1.8" height="1.8"/><rect x="2.2" y="30.3" width="1.8" height="1.8"/><rect x="5.3" y="30.3" width="1.8" height="1.8"/><rect x="8.4" y="30.3" width="1.8" height="1.8"/></g></svg>
<div class="rt" style="left:1159.5px;top:740.4px;font-size:11.8px;color:#e4e9ef">RU</div>
<svg class="a" style="left:1180px;top:737px" width="18" height="18" viewBox="0 0 18 18">
<defs><radialGradient id="hq2" cx=".4" cy=".3" r=".8"><stop offset="0" stop-color="#5a8cff"/><stop offset="1" stop-color="#0a1fa0"/></radialGradient></defs>
<circle cx="9" cy="9" r="7.6" fill="url(#hq2)" stroke="#d8dde6" stroke-width="1.2"/><circle cx="9" cy="9" r="8.4" fill="none" stroke="#3a4250" stroke-width=".7"/>
<text x="9" y="13.2" font-family="Liberation Sans" font-weight="bold" font-size="11" fill="#fff" text-anchor="middle">?</text>
</svg>
<svg class="a" style="left:1204px;top:735px" width="14" height="19" viewBox="0 0 14 19">
<rect x="5.5" y="2.5" width="6" height="3.5" fill="none" stroke="#f2f4f7" stroke-width="1.1"/><rect x="3.5" y="4.5" width="6" height="3.5" fill="#8597ae" stroke="#f2f4f7" stroke-width="1.1"/>
<path d="M5 15 L10 15 L7.5 17.5Z" fill="#f2f4f7"/>
</svg>
<svg class="a" style="left:1224px;top:744px" width="12" height="10" viewBox="0 0 12 10"><path d="M1.5 7.5 L5.8 2.5 L10 7.5Z" fill="#e8ecf0"/></svg>
<svg class="a" style="left:1245px;top:739px" width="18" height="19" viewBox="0 0 18 19">
<path d="M2 4 H8 V17 H2Z" fill="#fff" stroke="#111" stroke-width="1.2"/><path d="M5 2.5 H10 V15" fill="none" stroke="#111" stroke-width="1.2"/>
<path d="M9 6 H16 M9 10 H16 M10 5 V12 Q10 14 13 14 Q16 14 16 12 V7" fill="#fff" stroke="#111" stroke-width="1.2"/>
<path d="M11.5 3 V6 M14.5 3 V6 M13 14 V18" stroke="#111" stroke-width="1.2"/>
</svg>
<div class="rt" style="left:1293px;top:735.4px;font-size:11.3px;color:#eef1f5">19:23</div>
<div class="rt" style="left:1280px;top:752.3px;font-size:11.1px;color:#eef1f5">08.01.2018</div>
<div class="a" style="left:1345px;top:729px;width:15px;height:39px;border:1px solid #4a5568;border-right:none;background:linear-gradient(90deg,#95a6ba,#7d8ea4 60%,#6e7f96);box-shadow:inset 1px 1px 0 rgba(255,255,255,.35)"></div>
</body></html>
